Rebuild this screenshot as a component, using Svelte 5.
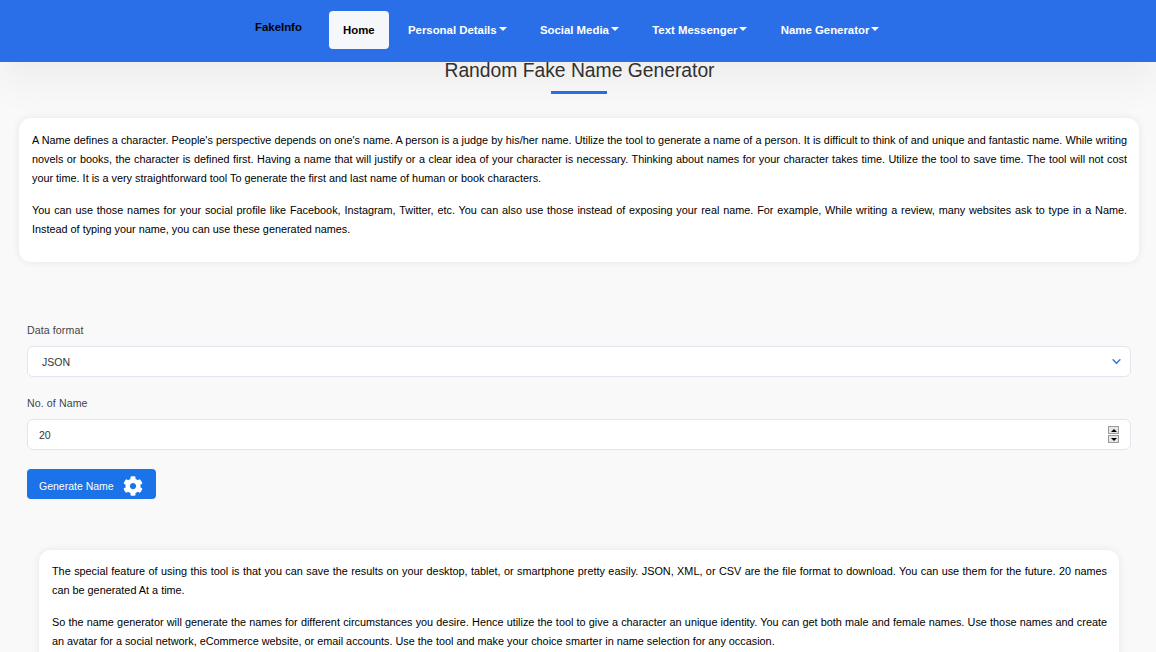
<script>
  const navItems = [
    { label: 'Personal Details' },
    { label: 'Social Media' },
    { label: 'Text Messenger' },
    { label: 'Name Generator' }
  ];
  let format = $state('JSON');
  let count = $state(20);
</script>

<header class="navbar">
  <a class="brand" href="#top">FakeInfo</a>
  <nav class="nav">
    <a class="nav-link active" href="#top">Home</a>
    {#each navItems as item}
      <a class="nav-link dropdown" href="#top">{item.label}</a>
    {/each}
  </nav>
</header>

<main>
  <h1 class="title">Random Fake Name Generator</h1>

  <section class="card intro">
    <p>A Name defines a character. People's perspective depends on one's name. A person is a judge by his/her name. Utilize the tool to generate a name of a person. It is difficult to think of and unique and fantastic name. While writing novels or books, the character is defined first. Having a name that will justify or a clear idea of your character is necessary. Thinking about names for your character takes time. Utilize the tool to save time. The tool will not cost your time. It is a very straightforward tool To generate the first and last name of human or book characters.</p>
    <p>You can use those names for your social profile like Facebook, Instagram, Twitter, etc. You can also use those instead of exposing your real name. For example, While writing a review, many websites ask to type in a Name. Instead of typing your name, you can use these generated names.</p>
  </section>

  <form class="form" onsubmit={(e) => e.preventDefault()}>
    <label for="format">Data format</label>
    <select id="format" bind:value={format}>
      <option>JSON</option>
      <option>XML</option>
      <option>CSV</option>
    </select>

    <label for="count">No. of Name</label>
    <div class="number">
      <input id="count" type="number" bind:value={count} />
      <span class="spin" aria-hidden="true">
        <span class="up"></span>
        <span class="down"></span>
      </span>
    </div>

    <button type="submit">
      Generate Name
      <svg viewBox="0 0 512 512" width="20" height="20" aria-hidden="true">
        <path fill="#fff" d="M487.4 315.7l-42.6-24.6c4.3-23.2 4.3-47 0-70.2l42.6-24.6c4.9-2.8 7.1-8.6 5.5-14-11.1-35.6-30-67.8-54.7-94.6-3.8-4.1-10-5.1-14.8-2.3L380.8 110c-17.9-15.4-38.5-27.3-60.8-35.1V25.8c0-5.6-3.9-10.5-9.4-11.7-36.7-8.2-74.3-7.8-109.2 0-5.5 1.2-9.4 6.1-9.4 11.7V75c-22.2 7.9-42.8 19.8-60.8 35.1L88.7 85.5c-4.9-2.8-11-1.9-14.8 2.3-24.7 26.7-43.6 58.9-54.7 94.6-1.7 5.4.6 11.2 5.5 14L67.3 221c-4.3 23.2-4.3 47 0 70.2l-42.6 24.6c-4.9 2.8-7.1 8.6-5.5 14 11.1 35.6 30 67.8 54.7 94.6 3.8 4.1 10 5.1 14.8 2.3l42.6-24.6c17.9 15.4 38.5 27.3 60.8 35.1v49.2c0 5.6 3.9 10.5 9.4 11.7 36.7 8.2 74.3 7.8 109.2 0 5.5-1.2 9.4-6.1 9.4-11.7v-49.2c22.2-7.9 42.8-19.8 60.8-35.1l42.6 24.6c4.9 2.8 11 1.9 14.8-2.3 24.7-26.7 43.6-58.9 54.7-94.6 1.5-5.5-.7-11.3-5.6-14.1zM256 336c-44.1 0-80-35.9-80-80s35.9-80 80-80 80 35.9 80 80-35.9 80-80 80z"/>
      </svg>
    </button>
  </form>

  <section class="card outro">
    <p>The special feature of using this tool is that you can save the results on your desktop, tablet, or smartphone pretty easily. JSON, XML, or CSV are the file format to download. You can use them for the future. 20 names can be generated At a time.</p>
    <p>So the name generator will generate the names for different circumstances you desire. Hence utilize the tool to give a character an unique identity. You can get both male and female names. Use those names and create an avatar for a social network, eCommerce website, or email accounts. Use the tool and make your choice smarter in name selection for any occasion.</p>
  </section>
</main>

<style>
  :global(body) {
    background: #f9f9f9;
    font-family: "Liberation Sans", Arial, sans-serif;
    height: 652px;
    overflow: hidden;
  }

  .navbar {
    height: 62px;
    background: #2a6fe8;
    box-shadow: 0 20px 40px rgba(0, 0, 0, 0.05);
    display: flex;
    align-items: flex-start;
    padding-left: 255px;
    box-sizing: border-box;
    position: relative;
    z-index: 1;
  }

  .brand {
    font-size: 11.4px;
    font-weight: bold;
    color: #000;
    text-decoration: none;
    margin-top: 21px;
    width: 74px;
  }

  .nav {
    display: flex;
    margin-top: 11px;
  }

  .nav-link {
    height: 38px;
    line-height: 38px;
    padding: 0 14px;
    margin-right: 5.3px;
    font-size: 11.4px;
    font-weight: bold;
    color: #fff;
    text-decoration: none;
    border-radius: 4px;
    white-space: nowrap;
  }

  .nav-link.active {
    background: #f5f7fa;
    color: #000;
  }

  .dropdown::after {
    content: "";
    display: inline-block;
    margin-left: 2px;
    vertical-align: 3px;
    border-top: 4px solid #fff;
    border-left: 4px solid transparent;
    border-right: 4px solid transparent;
  }

  .title {
    margin: 0;
    padding-left: 3px;
    height: 32px;
    line-height: 18px;
    font-size: 19.3px;
    font-weight: normal;
    color: #333;
    text-align: center;
    position: relative;
  }

  .title::after {
    content: "";
    position: absolute;
    left: 551px;
    top: 29px;
    width: 56px;
    height: 3px;
    background: #2a6fe8;
  }

  .card {
    background: #fff;
    border-radius: 12px;
    box-shadow: 0 0 8px rgba(0, 0, 0, 0.08);
    font-size: 10.85px;
    line-height: 19px;
    color: #000;
    text-align: justify;
  }

  .card p {
    margin: 0 0 13px;
  }

  .intro {
    margin: 24px 17px 0 19px;
    padding: 13px 12px 10px 13px;
  }

  .form {
    margin: 62px 25px 0 27px;
    display: flex;
    flex-direction: column;
    align-items: flex-start;
  }

  label {
    font-size: 10.6px;
    letter-spacing: 0.1px;
    line-height: 12px;
    color: #444;
    margin-bottom: 10px;
  }

  select,
  input {
    width: 100%;
    height: 31px;
    box-sizing: border-box;
    background-color: #fff;
    border: 1px solid #e3e5ee;
    border-radius: 6px;
    font-family: inherit;
    font-size: 10.5px;
    color: #333;
    outline: none;
  }

  select {
    padding: 0 14px;
    margin-bottom: 20px;
    appearance: none;
    background-image: url("data:image/svg+xml,%3Csvg xmlns='http://www.w3.org/2000/svg' viewBox='0 0 16 16'%3E%3Cpath fill='none' stroke='%232a6fe8' stroke-width='2' stroke-linecap='round' d='M3 5.5l5 5 5-5'/%3E%3C/svg%3E");
    background-repeat: no-repeat;
    background-position: right 8px center;
    background-size: 11px 11px;
  }

  .number {
    width: 100%;
    position: relative;
    margin-bottom: 18px;
  }

  input {
    display: block;
    padding: 0 11px;
    appearance: textfield;
  }

  input::-webkit-inner-spin-button {
    appearance: none;
    margin: 0;
  }

  .spin {
    position: absolute;
    right: 12px;
    top: 7px;
    width: 11px;
    display: flex;
    flex-direction: column;
    gap: 1px;
  }

  .spin span {
    height: 8px;
    box-sizing: border-box;
    background: #e6e6e6;
    border: 1px solid #9a9a9a;
    display: flex;
    align-items: center;
    justify-content: center;
  }

  .spin span::before {
    content: "";
    border-left: 3px solid transparent;
    border-right: 3px solid transparent;
  }

  .spin .up::before {
    border-bottom: 3px solid #000;
  }

  .spin .down::before {
    border-top: 3px solid #000;
  }

  button {
    width: 129px;
    height: 30px;
    margin-top: 1px;
    background: #1a73e8;
    color: #fff;
    border: none;
    border-radius: 4px;
    font-family: inherit;
    font-size: 10.5px;
    display: flex;
    align-items: center;
    gap: 9px;
    padding: 3px 12px 0;
  }

  .outro {
    margin: 51px 37px 0 39px;
    padding: 12px 12px 12px 13px;
  }
</style>
